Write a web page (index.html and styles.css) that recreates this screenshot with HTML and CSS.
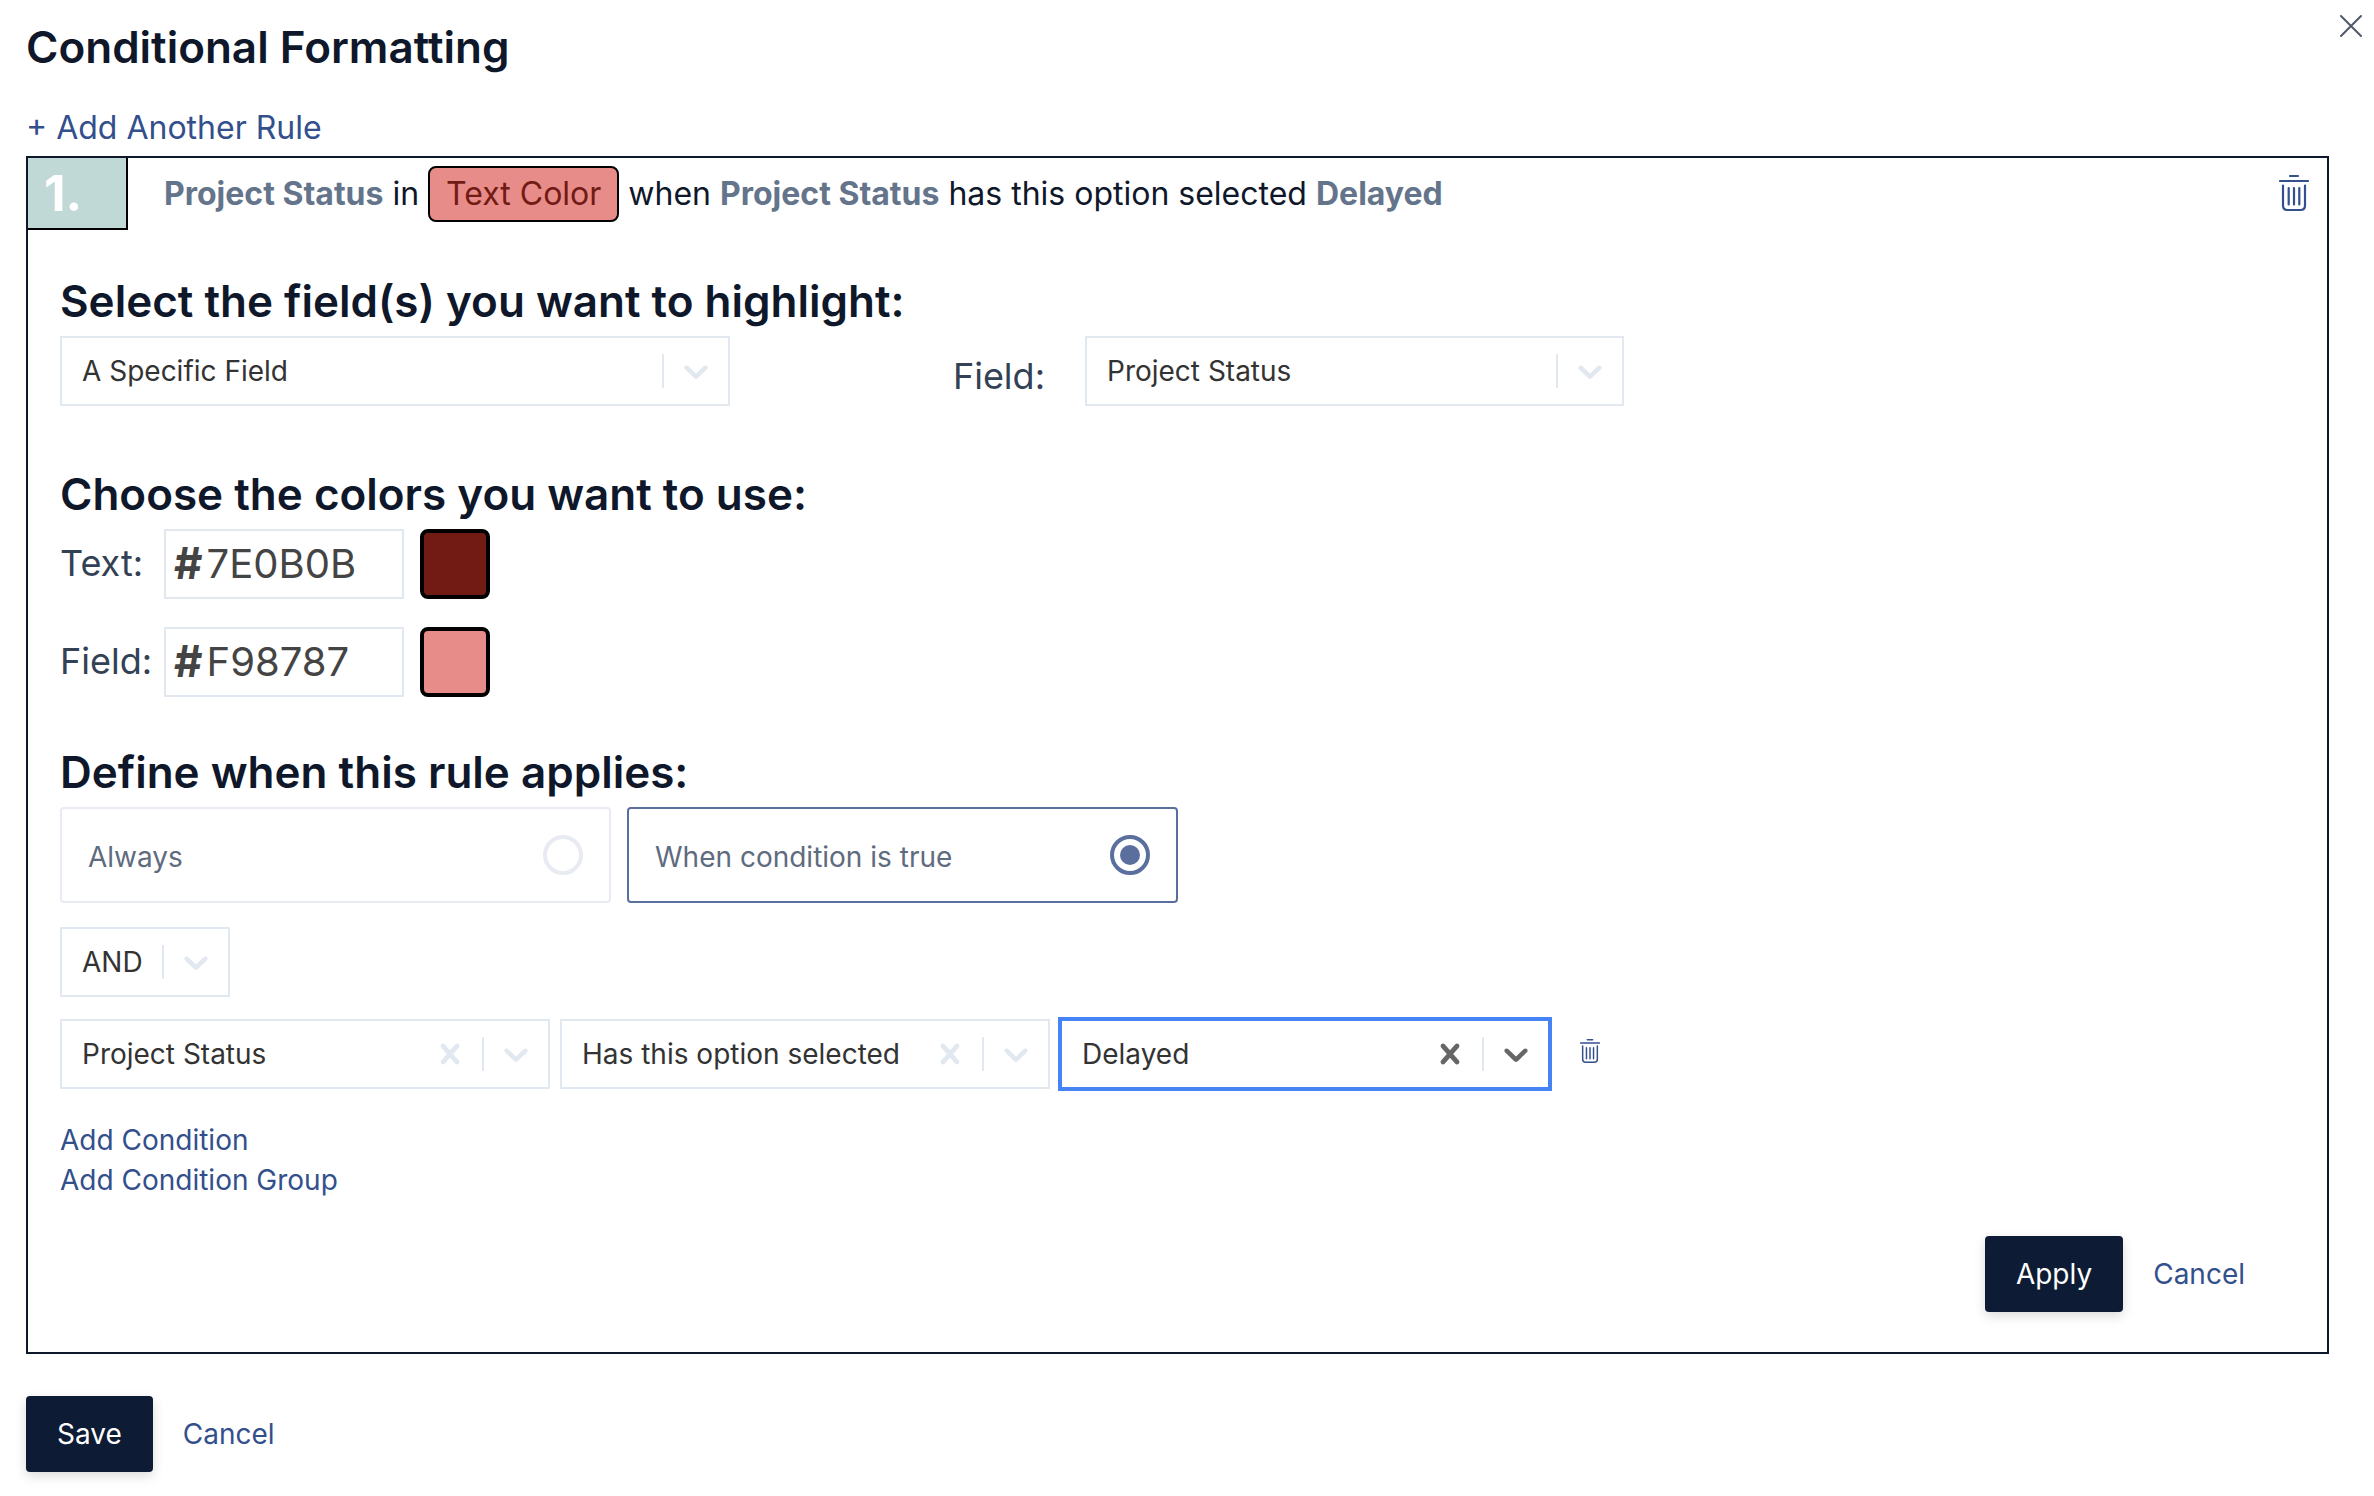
FILE: index.html
```html
<!DOCTYPE html>
<html lang="en">
<head>
    <meta charset="utf-8">
    <meta name="viewport" content="width=device-width, initial-scale=1">
    <title>Conditional Formatting</title>
    <link rel="stylesheet" href="styles.css">
</head>
<body>
    <!-- shared icons -->
    <svg class="sprite" aria-hidden="true">
        <symbol id="chevron" viewBox="0 0 20 20">
            <path d="M4.516 7.548c0.436-0.446 1.043-0.481 1.576 0l3.908 3.747 3.908-3.747c0.533-0.481 1.141-0.446 1.574 0 0.436 0.445 0.408 1.197 0 1.615-0.406 0.418-4.695 4.502-4.695 4.502-0.217 0.223-0.502 0.335-0.787 0.335s-0.57-0.112-0.789-0.335c0 0-4.287-4.084-4.695-4.502s-0.436-1.17 0-1.615z"/>
        </symbol>
        <symbol id="cross" viewBox="0 0 20 20">
            <path d="M14.348 14.849c-0.469 0.469-1.229 0.469-1.697 0l-2.651-3.030-2.651 3.029c-0.469 0.469-1.229 0.469-1.697 0-0.469-0.469-0.469-1.229 0-1.697l2.758-3.15-2.759-3.152c-0.469-0.469-0.469-1.228 0-1.697s1.228-0.469 1.697 0l2.652 3.031 2.651-3.031c0.469-0.469 1.228-0.469 1.697 0s0.469 1.229 0 1.697l-2.758 3.152 2.758 3.15c0.469 0.469 0.469 1.229 0 1.698z"/>
        </symbol>
        <symbol id="trash" viewBox="0 0 30 38">
            <path d="M11 2h8M1 7h28M4 11.500v20q0 4.500 4.500 4.500h13q4.500 0 4.500-4.500v-20M9.700 14v16.500M15 14v16.500M20.300 14v16.500" fill="none" stroke="currentColor" stroke-width="2.200" stroke-linecap="round"/>
        </symbol>
    </svg>

    <main class="dialog">
        <button class="close" type="button" aria-label="Close">
            <svg viewBox="0 0 24 24" width="24" height="24"><path d="M2 2l20 20M22 2L2 22" stroke="currentColor" stroke-width="2" stroke-linecap="round"/></svg>
        </button>
        <h1 class="title">Conditional Formatting</h1>
        <button class="link addrule" type="button">+ Add Another Rule</button>

        <section class="rule">
            <header class="rulehead">
                <div class="rulenum">1.</div>
                <p class="summary"><strong>Project Status</strong> in <span class="chip">Text Color</span> when <strong>Project Status</strong> has this option selected <strong>Delayed</strong></p>
                <button class="trash" type="button" aria-label="Delete rule"><svg class="trashicon"><use href="#trash"/></svg></button>
            </header>

            <div class="rulebody">
                <h2 class="heading">Select the field(s) you want to highlight:</h2>
                <div class="fields">
                    <div class="select fieldtype">
                        <select aria-label="Fields to highlight"><option>A Specific Field</option></select>
                        <span class="sep"></span>
                        <svg class="icon"><use href="#chevron"/></svg>
                    </div>
                    <div class="fieldpick">
                        <label class="label fieldlabel" for="field">Field:</label>
                        <div class="select fieldname">
                            <select id="field"><option>Project Status</option></select>
                            <span class="sep"></span>
                            <svg class="icon"><use href="#chevron"/></svg>
                        </div>
                    </div>
                </div>

                <h2 class="heading colorheading">Choose the colors you want to use:</h2>
                <div class="colors">
                    <div class="color">
                        <label class="label" for="textcolor">Text:</label>
                        <div class="hex"><b>#</b><input id="textcolor" type="text" value="7E0B0B"></div>
                        <button class="swatch swatchtext" type="button" aria-label="Pick text color"></button>
                    </div>
                    <div class="color">
                        <label class="label" for="fieldcolor">Field:</label>
                        <div class="hex"><b>#</b><input id="fieldcolor" type="text" value="F98787"></div>
                        <button class="swatch swatchfield" type="button" aria-label="Pick field color"></button>
                    </div>
                </div>

                <h2 class="heading whenheading">Define when this rule applies:</h2>
                <div class="choices">
                    <label class="choice"><span>Always</span><input type="radio" name="when"></label>
                    <label class="choice"><span>When condition is true</span><input type="radio" name="when" checked></label>
                </div>

                <div class="select operator">
                    <select aria-label="Operator"><option>AND</option></select>
                    <span class="sep"></span>
                    <svg class="icon"><use href="#chevron"/></svg>
                </div>

                <div class="condition">
                    <div class="select">
                        <select aria-label="Condition field"><option>Project Status</option></select>
                        <button class="clear" type="button" aria-label="Clear field"><svg class="icon"><use href="#cross"/></svg></button>
                        <span class="sep"></span>
                        <svg class="icon"><use href="#chevron"/></svg>
                    </div>
                    <div class="select">
                        <select aria-label="Condition"><option>Has this option selected</option></select>
                        <button class="clear" type="button" aria-label="Clear condition"><svg class="icon"><use href="#cross"/></svg></button>
                        <span class="sep"></span>
                        <svg class="icon"><use href="#chevron"/></svg>
                    </div>
                    <div class="select active">
                        <select aria-label="Value"><option>Delayed</option></select>
                        <button class="clear" type="button" aria-label="Clear value"><svg class="icon"><use href="#cross"/></svg></button>
                        <span class="sep"></span>
                        <svg class="icon"><use href="#chevron"/></svg>
                    </div>
                    <button class="trash trashsmall" type="button" aria-label="Delete condition"><svg class="trashicon"><use href="#trash"/></svg></button>
                </div>

                <div class="addlinks">
                    <button class="link" type="button">Add Condition</button>
                    <button class="link" type="button">Add Condition Group</button>
                </div>

                <div class="actions ruleactions">
                    <button class="primary" type="button">Apply</button>
                    <button class="link" type="button">Cancel</button>
                </div>
            </div>
        </section>

        <div class="actions">
            <button class="primary" type="button">Save</button>
            <button class="link" type="button">Cancel</button>
        </div>
    </main>
</body>
</html>
```
FILE: styles.css
```css
* {
    box-sizing: border-box;
}
body {
    margin: 0;
    background-color: #fff;
    color: #0f172a;
    font-family: Inter, "Liberation Sans", sans-serif;
    font-size: 28px;
    line-height: 40px;
}
button, input, select {
    font: inherit;
    color: inherit;
    margin: 0;
    padding: 0;
    border: none;
    background: none;
}
button {
    cursor: pointer;
}
.sprite {
    position: absolute;
    width: 0;
    height: 0;
}
.dialog {
    position: relative;
    padding: 19px 45px 24px 26px;
}
.close {
    position: absolute;
    top: 14px;
    right: 11px;
    width: 24px;
    height: 24px;
    color: #505968;
}
.close svg {
    display: block;
}
.title, .heading {
    margin: 0;
    font-size: 44px;
    font-weight: 600;
    line-height: 56px;
}
.title {
    margin-bottom: 33px;
}
.link {
    display: block;
    color: #334f8c;
    text-align: left;
}
.addrule {
    margin-bottom: 8px;
    font-size: 32px;
}

/* rule box */
.rule {
    border: 2px solid #0f172a;
    margin-bottom: 42px;
}
.rulehead {
    display: flex;
    align-items: center;
    padding-right: 18px;
    font-size: 32px;
}
.rulenum {
    width: 100px;
    height: 72px;
    padding-left: 16px;
    border-right: 2px solid #000;
    border-bottom: 2px solid #000;
    background-color: #c0d9d6;
    color: #fff;
    font-size: 50px;
    font-weight: 700;
    line-height: 70px;
}
.summary {
    flex: 1;
    margin: 0 0 0 36px;
}
.summary strong {
    color: #64748b;
    font-weight: 700;
}
.chip {
    display: inline-block;
    padding: 0 16px;
    border: 2px solid #000;
    border-radius: 8px;
    background-color: #e88c89;
    color: #711b14;
    line-height: 52px;
}
.trash {
    width: 30px;
    height: 38px;
    margin-bottom: 3px;
    color: #334f8c;
}
.trashicon {
    display: block;
    width: 100%;
    height: 100%;
}
.trashsmall {
    width: 20px;
    height: 26px;
    margin-bottom: 6px;
    margin-left: 20px;
}
.rulebody {
    padding: 43px 82px 40px 32px;
}
.heading {
    margin-bottom: 7px;
}
.colorheading {
    margin-top: 60px;
}
.whenheading {
    margin-top: 47px;
}

/* dropdowns */
.select {
    display: flex;
    align-items: center;
    height: 70px;
    padding: 0 12px 0 20px;
    border: 2px solid #e2e8f0;
    color: #333;
}
.select select {
    flex: 1;
    min-width: 0;
    height: 100%;
    appearance: none;
    outline: none;
}
.icon {
    display: block;
    width: 40px;
    height: 40px;
    fill: #e2e8f0;
}
.sep {
    width: 2px;
    height: 34px;
    margin-right: 12px;
    background-color: #e2e8f0;
}
.clear {
    margin-right: 12px;
}
.active {
    border-color: #4583f7;
    box-shadow: 0 0 0 2px #4583f7;
}
.active .icon {
    fill: #666;
}

.fields {
    display: flex;
    justify-content: space-between;
    max-width: 1564px;
}
.fieldtype {
    flex: 0 1 670px;
}
.fieldpick {
    display: flex;
    align-items: center;
    gap: 40px;
}
.fieldname {
    width: 539px;
}
.label {
    color: #334155;
    font-size: 36px;
    line-height: 50px;
}
.fieldlabel {
    padding-top: 10px;
}

/* colors */
.colors {
    display: grid;
    gap: 28px;
}
.color {
    display: flex;
    align-items: center;
}
.color .label {
    width: 104px;
    padding-bottom: 2px;
}
.hex {
    display: flex;
    align-items: center;
    gap: 4px;
    width: 240px;
    height: 70px;
    margin-right: 16px;
    padding: 0 0 2px 8px;
    border: 2px solid #e2e8f0;
    color: #444;
    font-size: 40px;
}
.hex b {
    font-size: 44px;
}
.hex input {
    flex: 1;
    min-width: 0;
}
.swatch {
    width: 70px;
    height: 70px;
    border: 4px solid #000;
    border-radius: 8px;
}
.swatchtext {
    background-color: #711b14;
}
.swatchfield {
    background-color: #e88c89;
}

/* always / when */
.choices {
    display: flex;
    gap: 16px;
}
.choice {
    display: flex;
    align-items: center;
    justify-content: space-between;
    flex: 0 1 551px;
    height: 96px;
    padding: 0 26px;
    border: 2px solid #e8ebf1;
    border-radius: 4px;
    color: #5f6b7e;
}
.choice span {
    padding-top: 4px;
}
.choice input {
    appearance: none;
    width: 40px;
    height: 40px;
    border: 4px solid #e8ebf1;
    border-radius: 50%;
}
.choice:has(input:checked) {
    border-color: #5b6f9f;
}
.choice input:checked {
    border-color: #5b6f9f;
    background: #5b6f9f content-box;
    padding: 6px;
}

.operator {
    width: 170px;
    margin: 24px 0 22px;
}
.condition {
    display: flex;
    align-items: center;
    gap: 10px;
}
.condition .select {
    flex: 0 1 490px;
}
.addlinks {
    margin-top: 31px;
}

.actions {
    display: flex;
    align-items: center;
    gap: 30px;
}
.ruleactions {
    justify-content: flex-end;
    margin-top: 36px;
}
.primary {
    height: 76px;
    padding: 0 31px;
    border-radius: 4px;
    background-color: #0d1b34;
    color: #fff;
    box-shadow: 0 4px 12px rgba(0, 0, 0, 0.15);
}
```
